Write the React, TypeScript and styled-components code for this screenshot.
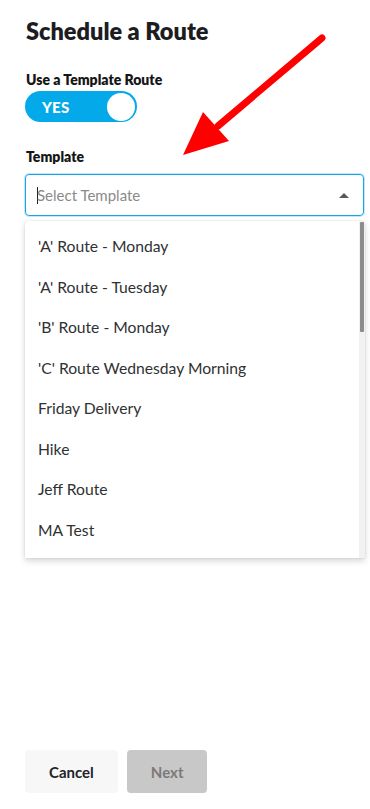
import React from "react";
import styled, { createGlobalStyle } from "styled-components";

const GlobalStyle = createGlobalStyle`
    html, body {
        margin: 0;
        padding: 0;
        background: #ffffff;
    }
    * {
        box-sizing: border-box;
    }
`;

const templates = [
    "'A' Route - Monday",
    "'A' Route - Tuesday",
    "'B' Route - Monday",
    "'C' Route Wednesday Morning",
    "Friday Delivery",
    "Hike",
    "Jeff Route",
    "MA Test",
];

const App = () => {
    return (
        <>
            <GlobalStyle />
            <Page>
                <Title>Schedule a Route</Title>

                <FieldLabel $top={25}>Use a Template Route</FieldLabel>
                <Toggle>
                    <ToggleText>YES</ToggleText>
                    <Knob />
                </Toggle>

                <FieldLabel $top={26}>Template</FieldLabel>
                <SelectWrap>
                    <SelectBox>
                        <Placeholder>
                            <Caret />
                            Select Template
                        </Placeholder>
                        <ArrowUp />
                    </SelectBox>
                    <Menu>
                        <OptionList>
                            {templates.map((t) => (
                                <Option key={t}>{t}</Option>
                            ))}
                        </OptionList>
                        <ScrollTrack>
                            <ScrollThumb />
                        </ScrollTrack>
                    </Menu>
                </SelectWrap>

                <Footer>
                    <Button>Cancel</Button>
                    <Button $disabled>Next</Button>
                </Footer>

                <Annotation width="370" height="200" viewBox="0 0 370 200">
                    <line x1="322" y1="38" x2="218" y2="126" stroke="#ff0000" strokeWidth="7" strokeLinecap="round" />
                    <polygon points="183,155 203,112 229,141" fill="#ff0000" />
                </Annotation>
            </Page>
        </>
    );
};

const Page = styled.div`
    position: relative;
    display: flex;
    flex-direction: column;
    height: 809px;
    padding: 16px 6px 16px 25px;
    font-family: Lato, "Open Sans", sans-serif;
    color: #1a1a1a;
`;

const Title = styled.h1`
    margin: 0;
    padding-left: 1px;
    font-size: 23.5px;
    line-height: 30px;
    font-weight: 800;
    color: #1d1d1f;
`;

const FieldLabel = styled.div<{ $top: number }>`
    margin-top: ${(p) => p.$top}px;
    padding-left: 1px;
    font-size: 14px;
    line-height: 18px;
    font-weight: 800;
    color: #161616;
`;

const Toggle = styled.div`
    margin-top: 2px;
    width: 112px;
    height: 31px;
    border-radius: 16px;
    background: #03a9e9;
    display: flex;
    align-items: center;
    justify-content: space-between;
    padding: 0 2px 0 17px;
`;

const ToggleText = styled.span`
    color: #ffffff;
    font-size: 15px;
    font-weight: 900;
    letter-spacing: 0.2px;
`;

const Knob = styled.span`
    width: 28px;
    height: 28px;
    border-radius: 50%;
    background: #ffffff;
`;

const SelectWrap = styled.div`
    position: relative;
    margin-top: 8px;
    width: 339px;
`;

const SelectBox = styled.div`
    height: 42px;
    border: 1px solid #14a5e6;
    border-radius: 4px;
    box-shadow: 0 0 0 1px rgba(20, 165, 230, 0.25);
    display: flex;
    align-items: center;
    justify-content: space-between;
    padding: 0 14px 0 11px;
`;

const Placeholder = styled.span`
    display: flex;
    align-items: center;
    font-size: 15px;
    color: #8a8a8a;
`;

const Caret = styled.span`
    width: 1px;
    height: 17px;
    background: #222222;
    margin-right: -1px;
`;

const ArrowUp = styled.span`
    width: 0;
    height: 0;
    border-left: 5px solid transparent;
    border-right: 5px solid transparent;
    border-bottom: 5px solid #555a60;
`;

const Menu = styled.div`
    position: absolute;
    top: 47px;
    left: 0;
    width: 340px;
    height: 337px;
    background: #ffffff;
    border-radius: 4px 4px 0 0;
    box-shadow: 0 3px 6px rgba(0, 0, 0, 0.16), 0 0 2px rgba(0, 0, 0, 0.12);
    display: flex;
    z-index: 2;
`;

const OptionList = styled.ul`
    flex: 1;
    margin: 0;
    padding: 5px 0 8px;
    list-style: none;
`;

const Option = styled.li`
    height: 40.5px;
    display: flex;
    align-items: center;
    padding-left: 13px;
    font-size: 15.7px;
    color: #2f3133;
`;

const ScrollTrack = styled.div`
    width: 6px;
    background: #f1f1f1;
    padding: 1px 1px 0 1px;
`;

const ScrollThumb = styled.div`
    height: 110px;
    background: #8c8c8c;
    border-radius: 1px;
`;

const Footer = styled.div`
    margin-top: auto;
    display: flex;
    gap: 9px;
`;

const Button = styled.button<{ $disabled?: boolean }>`
    height: 43px;
    padding: 0 24px;
    border: none;
    border-radius: 4px;
    font-family: Lato, "Open Sans", sans-serif;
    font-size: 15px;
    font-weight: 700;
    background: ${(p) => (p.$disabled ? "#c8c8c8" : "#f7f7f7")};
    color: ${(p) => (p.$disabled ? "#7a7a7a" : "#222428")};
`;

const Annotation = styled.svg`
    position: absolute;
    top: 0;
    left: 0;
    pointer-events: none;
    z-index: 3;
`;

export default App;
